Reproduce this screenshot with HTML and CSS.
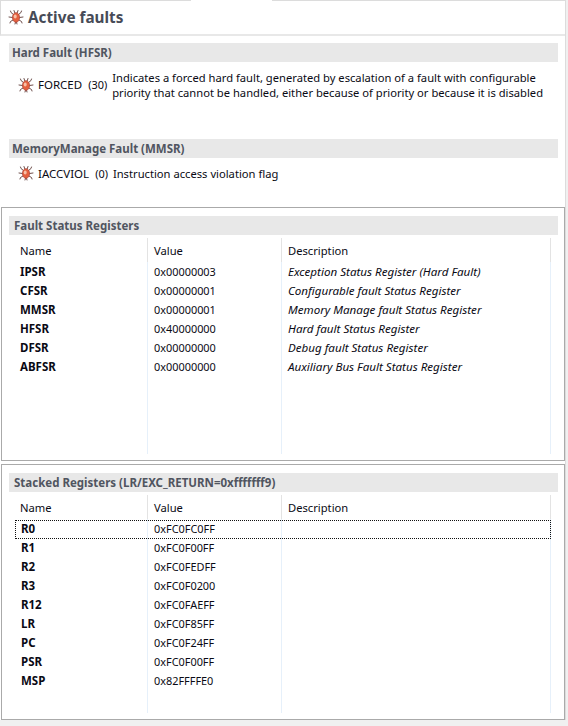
FILE: index.html
```html
<!DOCTYPE html>
<html lang="en">
<head>
<meta charset="utf-8">
<title>Active faults</title>
<link rel="stylesheet" href="styles.css">
</head>
<body>
<svg class="defs" width="0" height="0" aria-hidden="true">
  <symbol id="bug" viewBox="0 0 16 16">
    <g stroke="#5e3b38" stroke-width=".9" fill="none" stroke-linecap="round">
      <path d="M5.500 5.500 3 3.500 2.500 2M10.500 5.500 13 3.500 13.500 2M4.500 8.500 1 8M11.500 8.500 15 8M5 11 2.500 12.500 2 14M11 11 13.500 12.500 14 14"/>
      <path d="M6.800 3.800 6 1.500M9.200 3.800 10 1.500M7.500 13.500 7 15M8.500 13.500 9 15"/>
    </g>
    <ellipse cx="8" cy="8.500" rx="3.600" ry="4.800" fill="#e4603f" stroke="#a9443a" stroke-width=".7"/>
    <ellipse cx="7.200" cy="7.500" rx="1.500" ry="2" fill="#f7bfa6"/>
  </symbol>
</svg>
<main class="view">
  <div class="tabline"><span class="tabgap"></span></div>
  <header class="title">
    <svg class="icon"><use href="#bug"/></svg>
    <h1>Active faults</h1>
  </header>
  <section class="faults">
    <h2 class="bar">Hard Fault (HFSR)</h2>
    <div class="fault fault-hard">
      <svg class="icon"><use href="#bug"/></svg>
      <span class="code">FORCED</span>
      <span class="num">(30)</span>
      <p class="text">Indicates a forced hard fault, generated by escalation of a fault with configurable<br>priority that cannot be handled, either because of priority or because it is disabled</p>
    </div>
    <h2 class="bar">MemoryManage Fault (MMSR)</h2>
    <div class="fault">
      <svg class="icon"><use href="#bug"/></svg>
      <span class="code">IACCVIOL</span>
      <span class="num">(0)</span>
      <p class="text">Instruction access violation flag</p>
    </div>
  </section>
  <section class="panel panel-status">
    <h2 class="bar">Fault Status Registers</h2>
    <div class="table">
      <div class="row head"><span>Name</span><span>Value</span><span>Description</span></div>
      <div class="row"><b>IPSR</b><span>0x00000003</span><i>Exception Status Register (Hard Fault)</i></div>
      <div class="row"><b>CFSR</b><span>0x00000001</span><i>Configurable fault Status Register</i></div>
      <div class="row"><b>MMSR</b><span>0x00000001</span><i>Memory Manage fault Status Register</i></div>
      <div class="row"><b>HFSR</b><span>0x40000000</span><i>Hard fault Status Register</i></div>
      <div class="row"><b>DFSR</b><span>0x00000000</span><i>Debug fault Status Register</i></div>
      <div class="row"><b>ABFSR</b><span>0x00000000</span><i>Auxiliary Bus Fault Status Register</i></div>
    </div>
  </section>
  <section class="panel panel-stacked">
    <h2 class="bar">Stacked Registers (LR/EXC_RETURN=0xfffffff9)</h2>
    <div class="table">
      <div class="row head"><span>Name</span><span>Value</span><span>Description</span></div>
      <div class="row focus"><b>R0</b><span>0xFC0FC0FF</span><i></i></div>
      <div class="row"><b>R1</b><span>0xFC0F00FF</span><i></i></div>
      <div class="row"><b>R2</b><span>0xFC0FEDFF</span><i></i></div>
      <div class="row"><b>R3</b><span>0xFC0F0200</span><i></i></div>
      <div class="row"><b>R12</b><span>0xFC0FAEFF</span><i></i></div>
      <div class="row"><b>LR</b><span>0xFC0F85FF</span><i></i></div>
      <div class="row"><b>PC</b><span>0xFC0F24FF</span><i></i></div>
      <div class="row"><b>PSR</b><span>0xFC0F00FF</span><i></i></div>
      <div class="row"><b>MSP</b><span>0x82FFFFE0</span><i></i></div>
    </div>
  </section>
</main>
</body>
</html>
```
FILE: styles.css
```css
* { box-sizing: border-box; }
html, body { margin: 0; padding: 0; }
body {
  width: 568px;
  height: 726px;
  overflow: hidden;
  background: #f0f0f0;
  color: #0a0a14;
  font-family: "Noto Sans", "Open Sans", sans-serif;
  font-size: 11.2px;
}
.defs { position: absolute; }
.view {
  width: 566px;
  height: 720px;
  background: #fff;
  border-right: 1px solid #dcdcdc;
  display: flex;
  flex-direction: column;
}
.tabline { height: 1px; background: #dcdcdc; padding-left: 191px; }
.tabgap { display: block; width: 81px; height: 1px; background: #fff; }
.title {
  height: 35px;
  display: flex;
  align-items: center;
  gap: 4px;
  padding-left: 7px;
  border-bottom: 2px solid #e8e8e8;
  border-left: 1px solid #dcdcdc;
}
.title h1 {
  margin: 0;
  font-size: 15.3px;
  font-weight: 700;
  color: #474b57;
}
.icon { width: 16px; height: 16px; flex: none; }
.bar {
  margin: 0;
  height: 19px;
  line-height: 19px;
  background: #e8e8e8;
  color: #505560;
  font-size: 11.5px;
  font-weight: 700;
  padding-left: 3px;
}
.panel .bar { padding-left: 5px; }
.faults { padding: 7px 7px 0 8px; height: 172px; border-left: 1px solid #fff; }
.fault {
  display: flex;
  align-items: center;
  padding-left: 9px;
  height: 31px;
}
.fault-hard { height: 77px; padding-bottom: 31px; }
.fault .code { margin-left: 4px; font-size: 11.5px; }
.fault .num { margin-left: 6px; font-size: 10.9px; }
.fault .text { margin: 0 0 0 5px; line-height: 15px; white-space: nowrap; }
.panel {
  margin-left: 1px;
  width: 564px;
  border: 1px solid #aaa;
  padding: 8px 6px 0 7px;
  background: #fff;
  flex: none;
}
.panel-status { height: 254px; }
.panel-stacked { height: 256px; margin-top: 3px; }
.table {
  margin-top: 3px;
  height: calc(100% - 28px);
  background:
    linear-gradient(#e3e3e3, #e3e3e3) 138px 0 / 1px 24px no-repeat,
    linear-gradient(#e3e3e3, #e3e3e3) 272px 0 / 1px 24px no-repeat,
    linear-gradient(#e3e3e3, #e3e3e3) 541px 0 / 1px 24px no-repeat,
    linear-gradient(#e6f0fa, #e6f0fa) 138px 0 / 1px 100% no-repeat,
    linear-gradient(#e6f0fa, #e6f0fa) 272px 0 / 1px 100% no-repeat,
    linear-gradient(#e6f0fa, #e6f0fa) 541px 0 / 1px 100% no-repeat;
}
.row {
  position: relative;
  display: grid;
  grid-template-columns: 134px 134px 1fr;
  height: 19px;
  line-height: 19px;
  padding-left: 11px;
}
.row b { font-weight: 700; font-size: 11.5px; }
.row b + span { font-size: 10.9px; }
.row i { font-style: italic; font-size: 11.6px; }
.head { height: 24px; line-height: 25px; }
.panel-stacked .row b { padding-left: 1px; }
.focus::after {
  content: "";
  position: absolute;
  left: 6px;
  top: 1px;
  width: 534px;
  height: 17px;
  border: 1px dotted #111;
}
```
